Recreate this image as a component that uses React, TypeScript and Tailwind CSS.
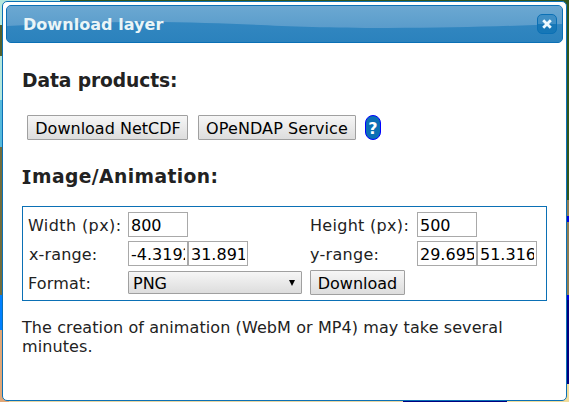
import type { ReactNode } from "react";

const font = "font-['DejaVu_Sans',sans-serif]";

function Button({ children, className = "" }: { children: ReactNode; className?: string }) {
  return (
    <button className={`h-[25px] shrink-0 rounded-[1px] border border-[#a0a0a0] bg-linear-to-b from-[#f6f6f6] to-[#dddddd] pt-[2px] text-center leading-[21px] whitespace-nowrap text-black ${className}`}>
      {children}
    </button>
  );
}

function Field({ value }: { value: string }) {
  return (
    <input
      className="h-[25px] w-[60px] shrink-0 border border-[#a9a9a9] bg-white px-[2px] pt-[2px] text-black outline-none"
      defaultValue={value}
    />
  );
}

export default function App() {
  return (
    <div className={`relative h-[402px] w-[569px] overflow-hidden bg-[#31551c] pt-px pl-[2px] text-[16px] text-[#222222] ${font}`}>
      <svg className="absolute top-0 left-0" width="569" height="402" shapeRendering="crispEdges">
        <path fill="#b5e7dc" d="M0 0h60v25H0z" />
        <path fill="#54612c" d="M0 25h3v31H0z" />
        <path fill="#b5e7dc" d="M0 56h3v44H0z" />
        <path fill="#55b9dc" d="M0 100h3v47H0z" />
        <path fill="#716c3c" d="M0 147h3v148H0z" />
        <path fill="#0080ff" d="M0 295h3v35H0z" />
        <path fill="#e1a777" d="M0 330h9v72H0z" />
        <path fill="#e8d5a2" d="M9 400h394v2H9z" />
        <path fill="#000080" d="M403 400h104v2H403zM566 300h3v84h-3z" />
        <path fill="#8d7c52" d="M566 200h3v100h-3z" />
        <path fill="#0000dd" d="M566 216h3v6h-3zM566 295h3v5h-3z" />
        <path fill="#efdc9b" d="M507 400h62v2h-62zM562 384h7v18h-7z" />
      </svg>
      <div className="relative h-[400px] w-[565px] rounded-[5px] border border-[#0b70b5] bg-white p-[3px]">
        <header className="relative flex h-[38px] items-center justify-between overflow-hidden rounded-[5px] border border-[#0b70b5] bg-[#3084be] pr-[5px] pl-[16px]">
          <svg className="absolute inset-0" width="555" height="36">
            <defs>
              <linearGradient id="top" x2="0" y2="1">
                <stop stopColor="#6ba8d2" />
                <stop offset="1" stopColor="#5a9ccb" />
              </linearGradient>
              <linearGradient id="bottom" x2="0" y2="1">
                <stop stopColor="#398bc3" />
                <stop offset="1" stopColor="#2b82bd" />
              </linearGradient>
            </defs>
            <path d="M0 0H555V36H0Z" fill="url(#bottom)" />
            <path d="M0 0H555V18C500 20 450 22 380 22C270 22 230 16 140 16C90 16 40 18 0 20Z" fill="url(#top)" />
          </svg>
          <h1 className="relative pt-px font-bold tracking-[0.05px] text-[#eaf5f7]">Download layer</h1>
          <button className="relative flex size-5 items-center justify-center rounded-[5px] border border-[#0b70b5] bg-linear-to-b from-[#3f8fc5] from-50% to-[#1677b7] to-50%">
            <svg width="10" height="10" viewBox="0 0 10 10">
              <path d="M2.2 2.2L7.8 7.8M7.8 2.2L2.2 7.8" stroke="#eefaff" strokeWidth="2.8" strokeLinecap="square" />
            </svg>
          </button>
        </header>
        <main className="px-[16px]">
          <h2 className="mt-[25px] h-[26px] text-[18.7px] leading-[26px] font-bold tracking-[-0.1px]">Data products:</h2>
          <div className="mt-[21px] flex pl-[5px]">
            <Button className="w-[161px] pl-px">Download NetCDF</Button>
            <Button className="ml-[10px] w-[158px] tracking-[0.1px]">OPeNDAP Service</Button>
            <span className="ml-[9px] flex h-[25px] w-[16px] items-center justify-center rounded-[8px] border border-[#0000ff] bg-[#0b70b5] pt-[2px] font-bold text-white">?</span>
          </div>
          <h2 className="mt-[24px] flex h-[26px] text-[18.7px] leading-[26px] font-bold tracking-[0.42px]">
            <span className="w-[10px] origin-left scale-x-125 font-['Noto_Sans',sans-serif]">I</span>
            <span>mage/Animation:</span>
          </h2>
          <div className="mt-[16px] grid h-[95px] w-[525px] grid-cols-[99px_182px_107px_auto] grid-rows-[25px_25px_25px] items-center gap-y-[4px] border border-[#0b70b5] py-[5px] pl-[6px] whitespace-nowrap">
            <label className="-ml-px pt-[2px] tracking-[0.4px]">Width (px):</label>
            <div className="flex"><Field value="800" /></div>
            <label className="pt-[2px] tracking-[0.3px]">Height (px):</label>
            <div className="flex"><Field value="500" /></div>
            <label className="pt-[2px] tracking-[0.15px]">x-range:</label>
            <div className="flex"><Field value="-4.3192" /><Field value="31.891" /></div>
            <label className="pt-[2px] tracking-[0.3px]">y-range:</label>
            <div className="flex"><Field value="29.695" /><Field value="51.316" /></div>
            <label className="-ml-px pt-[2px] tracking-[0.2px]">Format:</label>
            <div className="flex h-[23px] w-[174px] items-center justify-between rounded-[1px] border border-[#a0a0a0] bg-linear-to-b from-[#f6f6f6] to-[#dddddd] pr-[6px] pl-[4px] text-black">
              <span className="pt-[2px]">PNG</span>
              <svg width="6" height="6"><path d="M0 0H6L3 6Z" /></svg>
            </div>
            <Button className="w-[95px]">Download</Button>
          </div>
          <p className="mt-[17px] leading-[19px] tracking-[0.09px]">The creation of animation (WebM or MP4) may take several minutes.</p>
        </main>
      </div>
    </div>
  );
}
